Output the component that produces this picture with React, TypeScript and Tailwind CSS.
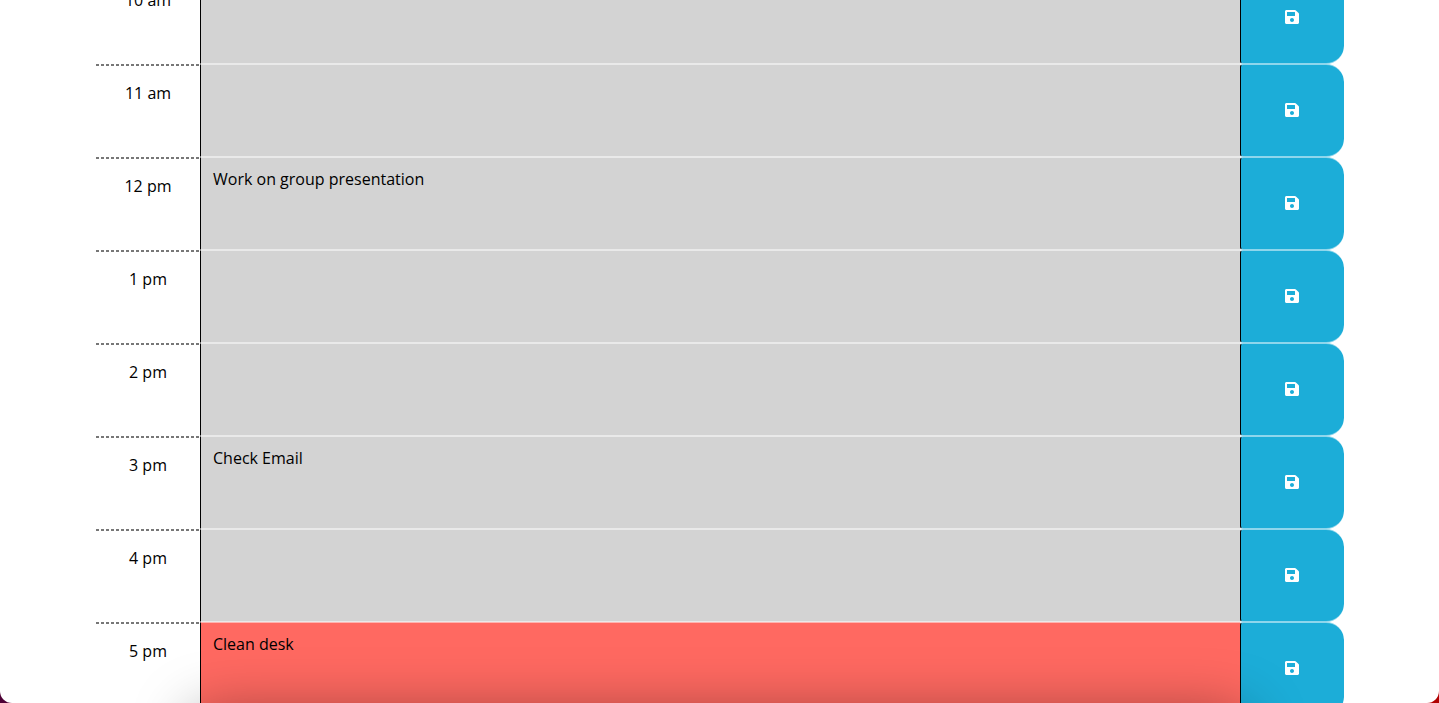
import { useState } from "react";
import { FaSave } from "react-icons/fa";

type Block = { hour: string; task: string; current?: boolean };

const blocks: Block[] = [
  { hour: "10 am", task: "" },
  { hour: "11 am", task: "" },
  { hour: "12 pm", task: "Work on group presentation" },
  { hour: "1 pm", task: "" },
  { hour: "2 pm", task: "" },
  { hour: "3 pm", task: "Check Email" },
  { hour: "4 pm", task: "" },
  { hour: "5 pm", task: "Clean desk", current: true },
];

function TimeBlock({ hour, task, current }: Block) {
  const [text, setText] = useState(task);
  const id = "task-" + hour.replace(" ", "-");
  return (
    <div className="grid h-[93px] grid-cols-[1fr_10fr_1fr]">
      <label
        htmlFor={id}
        className="bg-[repeating-linear-gradient(to_right,#777777_0_3px,transparent_3px_5px)] bg-[length:100%_2px] bg-no-repeat pt-[17px] text-center"
      >
        {hour}
      </label>
      <textarea
        id={id}
        value={text}
        onChange={(e) => setText(e.target.value)}
        className={`block h-full w-full resize-none overflow-hidden border-y border-l border-y-white/50 border-l-black px-3 py-[9px] outline-none ${
          current ? "bg-[#ff6961]" : "bg-[#d3d3d3]"
        }`}
      />
      <button
        type="button"
        aria-label={`Save ${hour}`}
        className="flex items-center justify-center rounded-l-[3px] rounded-r-[18px] border-y border-l border-y-white/50 border-l-black bg-[#1cadd8] pr-0.5 pb-px text-white"
      >
        <FaSave className="h-4 w-3.5" />
      </button>
    </div>
  );
}

export default function App() {
  return (
    <div className="h-screen overflow-hidden bg-linear-to-r from-[#4d0035] to-[#b00000] font-['Open_Sans',sans-serif] text-base text-black">
      <main className="relative h-full overflow-hidden rounded-b-xl bg-white">
        <div className="-mt-[29px] pr-[95px] pl-24">
          {blocks.map((block) => (
            <TimeBlock key={block.hour} {...block} />
          ))}
        </div>
        <div className="pointer-events-none absolute inset-x-48 top-full h-20 rounded-2xl shadow-[0_10px_60px_rgba(0,0,0,0.4)]" />
      </main>
    </div>
  );
}
